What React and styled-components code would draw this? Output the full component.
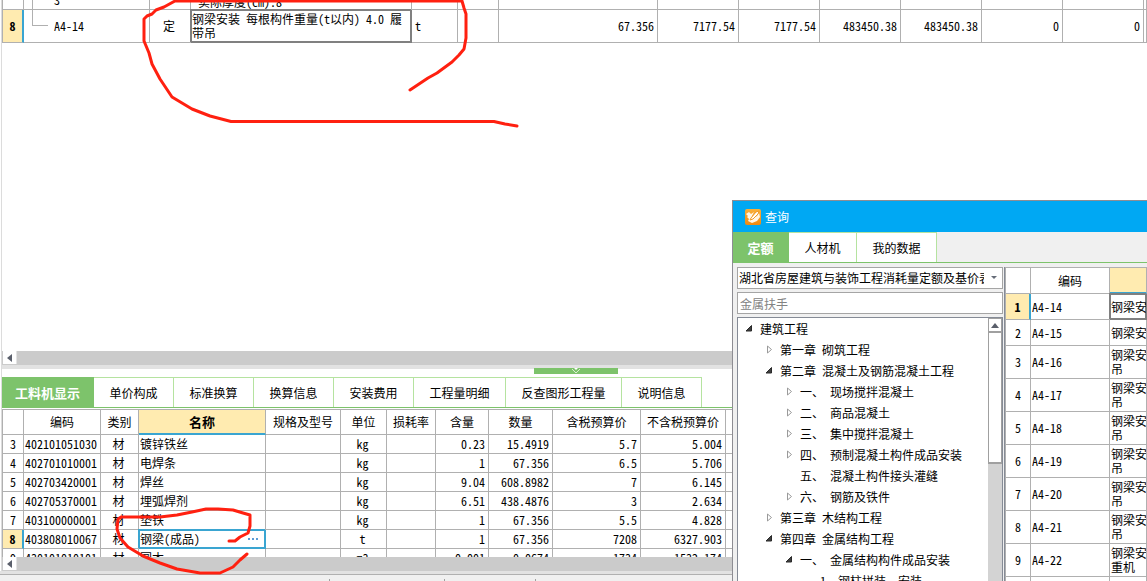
import React from "react";
import styled, { createGlobalStyle, css } from "styled-components";

const LINE = "#b0b0b0";
const BLUE = "#3aa5d1";
const GREEN = "#7dc36b";
const YELLOW = "#ffebb0";

const GlobalStyle = createGlobalStyle`
  * { box-sizing: border-box; }
  body { margin: 0; }
  body, button, input, select, table {
    font-family: "Noto Sans Mono CJK SC", "Noto Sans CJK SC", "Liberation Mono", monospace;
    font-size: 12px;
    line-height: 14px;
    color: #000;
  }
  button, input, select { margin: 0; padding: 0; border: 0; border-radius: 0; background: none; }
`;

const Page = styled.div`
  position: relative;
  display: flex;
  flex-direction: column;
  height: 100vh;
  overflow: hidden;
  background: #fff;
`;

const UpperPane = styled.section`
  flex: 1;
  min-height: 0;
  overflow: hidden;
  margin-left: 1px;
  border-left: 1px solid #dcdcdc;
`;

const LowerPane = styled.section`
  flex: none;
  margin-left: 1px;
  border-left: 1px solid #dcdcdc;
`;

const Grid = styled.table`
  width: 100%;
  table-layout: fixed;
  border-collapse: separate;
  border-spacing: 0;
  border-left: 1px solid ${LINE};
  border-top: ${(p) => (p.$topLine ? `1px solid ${LINE}` : "0")};
  margin-top: ${(p) => p.$shift || 0}px;
`;

const Row = styled.tr`
  height: ${(p) => p.$h}px;
`;

const selected = css`
  border-color: ${(p) => p.$selected};
  box-shadow: inset 0 0 0 1px ${(p) => p.$selected}, -1px -1px 0 0 ${(p) => p.$selected};
`;

const Cell = styled.td`
  padding: 0 3px 0 1px;
  border-right: 1px solid ${LINE};
  border-bottom: 1px solid ${LINE};
  text-align: ${(p) => p.$align || "left"};
  vertical-align: ${(p) => p.$valign || "middle"};
  white-space: pre;
  overflow: hidden;
  ${(p) => p.$selected && selected}
`;

const HeadCell = styled.th`
  padding: 0;
  border-right: 1px solid ${LINE};
  border-bottom: 1px solid ${LINE};
  font-weight: ${(p) => (p.$active ? "bold" : "normal")};
  background: ${(p) => (p.$active ? YELLOW : "#fff")};
  ${(p) => p.$active && `font-size: 13px; border-bottom: 2px solid ${BLUE};`}
  white-space: nowrap;
  overflow: hidden;
`;

const RowNumber = styled.th`
  padding: 0;
  border-right: 1px solid ${LINE};
  border-bottom: 1px solid ${LINE};
  font-weight: normal;
  text-align: center;
  ${(p) => p.$active && `font-weight: bold; background: ${YELLOW}; border-right: 2px solid ${BLUE};`}
`;

const TreeCell = styled.div`
  display: flex;
  align-items: flex-end;
  height: 32px;
  padding: 0 0 ${(p) => (p.$leaf ? 9 : 2)}px 7px;
`;

const Branch = styled.span`
  flex: none;
  width: 16px;
  height: ${(p) => (p.$leaf ? 16 : 32)}px;
  margin: 0 6px ${(p) => (p.$leaf ? 7 : -2)}px 0;
  border-left: 1px solid ${LINE};
  border-bottom: ${(p) => (p.$leaf ? `1px solid ${LINE}` : "0")};
`;

const Indented = styled.span`
  padding-left: 6px;
`;

const Unit = styled.span`
  padding-left: 2px;
`;

const HScroll = styled.div`
  display: flex;
  height: 14px;
  padding-left: 1px;
  background: #cbcbcb;
`;

const ScrollButton = styled.button`
  display: flex;
  align-items: center;
  justify-content: center;
  flex: none;
  background: #fff;
  width: ${(p) => (p.$vertical ? 14 : 13)}px;
  height: ${(p) => (p.$vertical ? 14 : 13)}px;
  border: ${(p) => (p.$vertical ? "1px solid #a0a0a0" : "0")};
  box-shadow: ${(p) => (p.$vertical ? "none" : "1px 0 0 #e4e4e4")};
`;

const Splitter = styled.div`
  display: flex;
  padding-left: 532px;
  height: 12px;
  border-top: 4px solid #e2e2e2;
`;

const SplitHandle = styled.button`
  display: flex;
  justify-content: center;
  width: 84px;
  height: 6px;
  margin-top: -1px;
  background: ${GREEN};
`;

const Tabs = styled.nav`
  display: flex;
  flex: none;
  height: 31px;
  border-bottom: 1px solid ${GREEN};
`;

const Tab = styled.button`
  width: ${(p) => p.$w}px;
  border-right: 1px solid #b5e3a0;
  border-top: 1px solid #b5e3a0;
  background: #fff;
  ${(p) =>
    p.$active &&
    `background: ${GREEN}; color: #fff; font-size: 13px; font-weight: bold; border-color: ${GREEN};`}
`;

const MaterialArea = styled.div`
  height: 149px;
  padding-top: 1px;
  overflow: hidden;
`;

const EditCell = styled.div`
  display: flex;
  justify-content: space-between;
  align-items: center;
`;

const MoreButton = styled.button`
  display: flex;
  gap: 2px;
  margin-right: 4px;
  &::before, &::after, span {
    content: "";
    width: 2px;
    height: 2px;
    background: #5b9bd5;
  }
`;

const StatusBar = styled.footer`
  display: flex;
  align-items: flex-end;
  height: 10px;
  flex: none;
  border-top: 3px solid #e2e2e2;
  background: #f0f0f0;
  box-shadow: inset 0 1px 0 #b0b0b0;
`;

const StatusPart = styled.span`
  width: ${(p) => p.$w}px;
  height: 2px;
  border-right: 1px solid #a0a0a0;
`;

const Dialog = styled.section`
  position: absolute;
  left: 732px;
  top: 200px;
  right: 0;
  bottom: 0;
  display: flex;
  flex-direction: column;
  border-left: 1px solid #8d8d93;
  border-top: 1px solid #8d8d93;
  background: #f0f0f0;
  overflow: hidden;
`;

const TitleBar = styled.header`
  display: flex;
  align-items: center;
  gap: 4px;
  flex: none;
  height: 31px;
  padding-left: 12px;
  background: #00a8f3;
  color: #fff;
`;

const DialogBody = styled.div`
  display: flex;
  gap: 1px;
  flex: 1;
  min-height: 0;
  padding: 4px 0 0 4px;
`;

const Side = styled.div`
  display: flex;
  flex-direction: column;
  flex: none;
  width: 266px;
`;

const Field = styled.label`
  display: flex;
  align-items: center;
  flex: none;
  height: 22px;
  margin-bottom: 3px;
  border: 1px solid #a5a5a5;
  background: #fff;
`;

const BookSelect = styled.select`
  appearance: none;
  width: 246px;
  height: 20px;
  padding-left: 1px;
  overflow: hidden;
  white-space: nowrap;
  text-overflow: clip;
`;

const Chevron = styled.svg`
  margin-left: 7px;
`;

const SearchInput = styled.input`
  width: 100%;
  height: 20px;
  padding-left: 2px;
  &::placeholder { color: #838383; opacity: 1; }
`;

const TreeBox = styled.div`
  display: flex;
  flex: 1;
  min-height: 0;
  border: 1px solid #858b96;
  border-bottom: 0;
  background: #fff;
`;

const Tree = styled.ul`
  flex: 1;
  min-width: 0;
  margin: 0;
  padding: 0;
  list-style: none;
  overflow: hidden;
`;

const TreeItem = styled.li`
  display: flex;
  align-items: center;
  height: 21px;
  padding-left: ${(p) => 6 + p.$level * 20}px;
  white-space: pre;
`;

const Toggle = styled.svg`
  flex: none;
  margin-right: 4px;
`;

const VScroll = styled.div`
  display: flex;
  flex-direction: column;
  width: 14px;
  background: #d3d3d3;
`;

const Thumb = styled.div`
  height: 132px;
  border: 1px solid #a0a0a0;
  border-bottom-width: 2px;
  background: #fff;
`;

const Results = styled.div`
  flex: 1;
  min-width: 0;
  border-left: 1px solid #858b96;
  background: #fff;
  overflow: hidden;
`;

const Marks = styled.svg`
  position: absolute;
  left: 0;
  top: 0;
  pointer-events: none;
`;

const estimateCols = [21, 126, 41, 221, 46, 41, 159, 81, 81, 81, 81, 81, 81];
const amounts = ["67.356", "7177.54", "7177.54", "483450.38", "483450.38", "0", "0"];

const lowerTabs = [
  ["工料机显示", 92],
  ["单价构成", 80],
  ["标准换算", 80],
  ["换算信息", 80],
  ["安装费用", 80],
  ["工程量明细", 92],
  ["反查图形工程量", 116],
  ["说明信息", 80],
];

const materialCols = [21, 77, 38, 127, 75, 46, 49, 53, 64, 88, 85];
const materialHeads = ["", "编码", "类别", "名称", "规格及型号", "单位", "损耗率", "含量", "数量", "含税预算价", "不含税预算价", ""];
const materials = [
  ["3", "402101051030", "镀锌铁丝", "kg", "0.23", "15.4919", "5.7", "5.004"],
  ["4", "402701010001", "电焊条", "kg", "1", "67.356", "6.5", "5.706"],
  ["5", "402703420001", "焊丝", "kg", "9.04", "608.8982", "7", "6.145"],
  ["6", "402705370001", "埋弧焊剂", "kg", "6.51", "438.4876", "3", "2.634"],
  ["7", "403100000001", "垫铁", "kg", "1", "67.356", "5.5", "4.828"],
  ["8", "403808010067", "钢梁(成品)", "t", "1", "67.356", "7208", "6327.903"],
  ["9", "430101010101", "圆木", "m3", "0.001", "0.0674", "1734", "1532.174"],
];

const chapters = [
  [0, "open", "建筑工程"],
  [1, "closed", "第一章 砌筑工程"],
  [1, "open", "第二章 混凝土及钢筋混凝土工程"],
  [2, "closed", "一、 现场搅拌混凝土"],
  [2, "closed", "二、 商品混凝土"],
  [2, "closed", "三、 集中搅拌混凝土"],
  [2, "closed", "四、 预制混凝土构件成品安装"],
  [2, "none", "五、 混凝土构件接头灌缝"],
  [2, "closed", "六、 钢筋及铁件"],
  [1, "closed", "第三章 木结构工程"],
  [1, "open", "第四章 金属结构工程"],
  [2, "open", "一、 金属结构构件成品安装"],
  [3, "none", "1、钢柱拼装、安装"],
];

const results = [
  ["A4-14", "钢梁安", 26],
  ["A4-15", "钢梁安", 26],
  ["A4-16", "钢梁安\n吊", 33],
  ["A4-17", "钢梁安\n吊", 33],
  ["A4-18", "钢梁安\n吊", 33],
  ["A4-19", "钢梁安\n吊", 33],
  ["A4-20", "钢梁安\n吊", 33],
  ["A4-21", "钢梁安\n吊", 33],
  ["A4-22", "钢梁安\n重机", 33],
  ["", "", 33],
];

function Cols({ widths }) {
  return (
    <colgroup>
      {widths.map((w, i) => (
        <col key={i} style={{ width: w }} />
      ))}
      <col />
    </colgroup>
  );
}

function LeftScroll() {
  return (
    <HScroll>
      <ScrollButton aria-label="向左滚动">
        <svg width="5" height="8" viewBox="0 0 5 8">
          <path d="M5 0v8L0 4z" fill="#5a5f6b" />
        </svg>
      </ScrollButton>
    </HScroll>
  );
}

function EstimateTable() {
  return (
    <Grid $shift={-23}>
      <Cols widths={estimateCols} />
      <tbody>
        <Row $h={33}>
          <RowNumber />
          <Cell>
            <TreeCell>
              <Branch />3
            </TreeCell>
          </Cell>
          <Cell />
          <Cell $valign="bottom">
            <Indented>实际厚度(cm):8</Indented>
          </Cell>
          {Array.from({ length: 10 }, (_, i) => (
            <Cell key={i} />
          ))}
        </Row>
        <Row $h={33}>
          <RowNumber $active>8</RowNumber>
          <Cell>
            <TreeCell $leaf>
              <Branch $leaf />
              A4-14
            </TreeCell>
          </Cell>
          <Cell $align="center">定</Cell>
          <Cell $selected="#808080">{"钢梁安装 每根构件重量(t以内) 4.0 履\n带吊"}</Cell>
          <Cell>
            <Unit>t</Unit>
          </Cell>
          <Cell />
          {amounts.map((a, i) => (
            <Cell key={i} $align="right">
              {a}
            </Cell>
          ))}
          <Cell />
        </Row>
      </tbody>
    </Grid>
  );
}

function MaterialTable() {
  return (
    <Grid $topLine>
      <Cols widths={materialCols} />
      <thead>
        <Row $h={25}>
          {materialHeads.map((h, i) => (
            <HeadCell key={i} $active={h === "名称"}>
              {h}
            </HeadCell>
          ))}
        </Row>
      </thead>
      <tbody>
        {materials.map(([no, code, name, unit, content, qty, taxed, net]) => {
          const active = no === "8";
          return (
            <Row key={no} $h={19}>
              <RowNumber $active={active}>{no}</RowNumber>
              <Cell>{code}</Cell>
              <Cell $align="center">材</Cell>
              <Cell $selected={active ? BLUE : undefined}>
                {active ? (
                  <EditCell>
                    {name}
                    <MoreButton aria-label="更多">
                      <span />
                    </MoreButton>
                  </EditCell>
                ) : (
                  name
                )}
              </Cell>
              <Cell />
              <Cell $align="center">{unit}</Cell>
              <Cell />
              <Cell $align="right">{content}</Cell>
              <Cell $align="right">{qty}</Cell>
              <Cell $align="right">{taxed}</Cell>
              <Cell $align="right">{net}</Cell>
              <Cell />
            </Row>
          );
        })}
      </tbody>
    </Grid>
  );
}

function TreeToggle({ state }) {
  return (
    <Toggle width="12" height="10" viewBox="0 0 12 10">
      {state === "open" && <path d="M7.500 1.500v5.500H2z" fill="#404040" stroke="#2a2a2a" strokeWidth="1" strokeLinejoin="round" />}
      {state === "closed" && <path d="M3.500 1v7L7.500 4.500z" fill="#fff" stroke="#9a9a9a" />}
    </Toggle>
  );
}

function QueryDialog() {
  return (
    <Dialog role="dialog" aria-label="查询">
      <TitleBar>
        <svg width="16" height="16" viewBox="0 0 16 16">
          <defs>
            <linearGradient id="badge" x1="0" y1="0" x2="0" y2="1">
              <stop offset="0" stopColor="#f9b03a" />
              <stop offset="1" stopColor="#f08a10" />
            </linearGradient>
          </defs>
          <rect width="16" height="16" rx="2" fill="url(#badge)" />
          <path d="M1 5l3-2 2 2 3-2-2 4 1 2 4-2 2-3 1 4-3 4-5 2-4-2 1-2-2-2 1-1z" fill="#fff6e6" />
          <path d="M6 9l5-6 3-1-1 3-5 5-3 1z" fill="#fff" stroke="#f29a24" strokeWidth="1" />
        </svg>
        查询
      </TitleBar>
      <Tabs>
        <Tab $w={56} $active>定额</Tab>
        <Tab $w={68}>人材机</Tab>
        <Tab $w={80}>我的数据</Tab>
      </Tabs>
      <DialogBody>
        <Side>
          <Field>
            <BookSelect aria-label="定额库">
              <option>湖北省房屋建筑与装饰工程消耗量定额及基价表</option>
            </BookSelect>
            <Chevron width="6" height="4" viewBox="0 0 6 4">
              <path d="M0 0h6L3 3z" fill="#666c78" />
            </Chevron>
          </Field>
          <Field>
            <SearchInput aria-label="搜索" placeholder="金属扶手" />
          </Field>
          <TreeBox>
            <Tree>
              {chapters.map(([level, state, label], i) => (
                <TreeItem key={i} $level={level}>
                  <TreeToggle state={state} />
                  {label}
                </TreeItem>
              ))}
            </Tree>
            <VScroll>
              <ScrollButton $vertical aria-label="向上滚动">
                <svg width="8" height="5" viewBox="0 0 8 5">
                  <path d="M0 5h8L4 0z" fill="#5a5f6b" />
                </svg>
              </ScrollButton>
              <Thumb />
            </VScroll>
          </TreeBox>
        </Side>
        <Results>
          <Grid $topLine>
            <Cols widths={[25, 79]} />
            <thead>
              <Row $h={26}>
                <HeadCell />
                <HeadCell>编码</HeadCell>
                <HeadCell $active />
              </Row>
            </thead>
            <tbody>
              {results.map(([code, name, h], i) => (
                <Row key={i} $h={h}>
                  <RowNumber $active={i === 0}>{code && i + 1}</RowNumber>
                  <Cell>{code}</Cell>
                  <Cell $selected={i === 0 ? "#808080" : undefined}>{name}</Cell>
                </Row>
              ))}
            </tbody>
          </Grid>
        </Results>
      </DialogBody>
    </Dialog>
  );
}

export default function App() {
  return (
    <>
      <GlobalStyle />
      <Page>
        <UpperPane>
          <EstimateTable />
        </UpperPane>
        <LowerPane>
          <LeftScroll />
          <Splitter>
            <SplitHandle aria-label="折叠">
              <svg width="10" height="6" viewBox="0 0 10 6">
                <path d="M3 0h4L5 2z" fill="#fff" />
                <path d="M1 1l4 4 4-4" fill="none" stroke="#d8f0d0" />
              </svg>
            </SplitHandle>
          </Splitter>
          <Tabs>
            {lowerTabs.map(([label, w], i) => (
              <Tab key={label} $w={w} $active={i === 0}>
                {label}
              </Tab>
            ))}
          </Tabs>
          <MaterialArea>
            <MaterialTable />
          </MaterialArea>
          <LeftScroll />
        </LowerPane>
        <StatusBar>
          <StatusPart $w={330} />
          <StatusPart $w={115} />
          <StatusPart $w={91} />
        </StatusBar>
        <QueryDialog />
        <Marks width="530" height="581" viewBox="0 0 530 581" fill="none" stroke="#ff2010" strokeWidth="3" strokeLinecap="round" strokeLinejoin="round">
          <path d="M410 90L428 78L437 73L452 62L459 55L464 49L466 38V14L464 8L462 1H175L164 7L156 10L152 14L147 16L144 19V41L149 53L152 64L160 79L172 97L192 109L210 116L231 121.500H494L505 124L517 126" />
          <path d="M229 541H235L240 537L248 533L250 526V515L243 513L233 510L218 509H206L192 512L177 515L160 517H121L118 519L117 529L120 538L128 547L143 556L160 563L177 569L200 573H220L233 567L240 560L247 554" />
        </Marks>
      </Page>
    </>
  );
}
